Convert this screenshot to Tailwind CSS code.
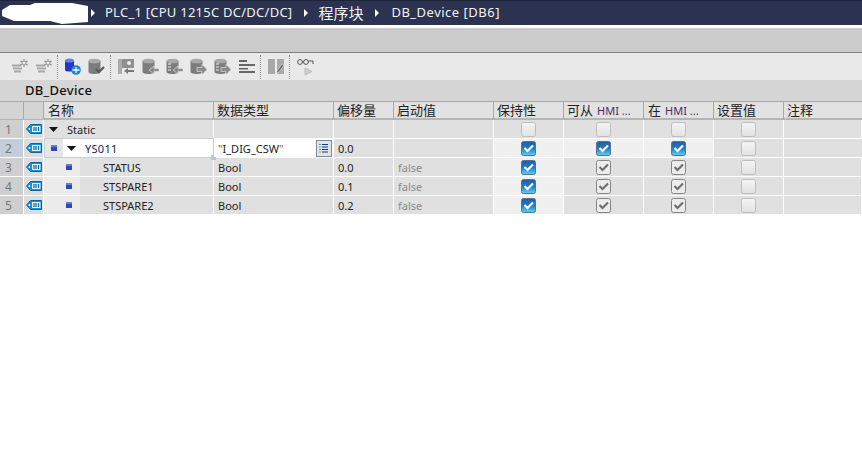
<!doctype html>
<html><head><meta charset="utf-8">
<script src="https://cdn.jsdelivr.net/npm/@tailwindcss/browser@4"></script>
</head>
<body class="w-[862px] h-[460px] overflow-hidden bg-white font-['Noto_Sans','Noto_Sans_CJK_SC',sans-serif] text-[11px] text-[#222]">
<svg class="absolute w-0 h-0"><defs>
<linearGradient id="blue" x1="0" y1="0" x2="0" y2="1"><stop offset="0" stop-color="#1d5fa8"/><stop offset=".5" stop-color="#2478c8"/><stop offset="1" stop-color="#55d8f8"/></linearGradient>
<linearGradient id="pale" x1="0" y1="0" x2="0" y2="1"><stop offset="0" stop-color="#f4f4f4"/><stop offset="1" stop-color="#e2e2e2"/></linearGradient>
<symbol id="tag" viewBox="0 0 16 10"><path d="M0.5 5 L4.500 0.500 H15.500 V9.500 H4.500 Z" fill="#1192d6" stroke="#0b66a5"/><rect x="6" y="2" width="8.500" height="6" fill="#eaf7ff"/><path d="M8 3v4M10 3v4M12.500 3v4" stroke="#0f6fb0" stroke-width="1.300"/><circle cx="3.400" cy="5" r="1" fill="#fff"/></symbol>
<symbol id="tri" viewBox="0 0 9 5"><path d="M0 0H9L4.500 5Z" fill="#111"/></symbol>
<symbol id="on" viewBox="0 0 15 15"><rect x="0.500" y="0.500" width="14" height="14" rx="2" fill="url(#blue)" stroke="#5a7188"/><path d="M3.500 7 L6.500 10 L12 4.500" fill="none" stroke="#fff" stroke-width="2.200"/></symbol>
<symbol id="gr" viewBox="0 0 15 15"><rect x="0.500" y="0.500" width="14" height="14" rx="2" fill="#ececec" stroke="#858585"/><path d="M3.500 7 L6.500 10 L12 4.500" fill="none" stroke="#6e6e6e" stroke-width="2.200"/></symbol>
<symbol id="off" viewBox="0 0 15 15"><rect x="0.500" y="0.500" width="14" height="14" rx="2" fill="url(#pale)" stroke="#bdbdbd"/></symbol>
<symbol id="dot" viewBox="0 0 6 6"><rect width="6" height="6" fill="#3346b8"/><rect width="6" height="2" fill="#6a7ad8"/></symbol>
<symbol id="gear" viewBox="0 0 17 17"><path d="M0 7.500h9M1 10.500h9M2 13.500h7" stroke="#a8a8a8" stroke-width="1.800"/><path d="M12 1v8M8.500 3l7 4M15.500 3l-7 4" stroke="#9a9a9a" stroke-width="1.500"/><circle cx="12" cy="5" r="1.300" fill="#eee"/></symbol>
<symbol id="db" viewBox="0 0 17 17"><path d="M0.500 3V14c0 2.600 12 2.600 12 0V3Z" fill="#7d7d7d"/><ellipse cx="6.500" cy="3" rx="6" ry="2.300" fill="#a9a9a9"/></symbol>
</defs></svg>

<header class="h-[25px] bg-[#2b3350] border-t border-[#1d2336] flex items-center text-[#f2f2f2] text-[13px] tracking-[0.25px]">
  <svg class="w-[89px] h-[24px] shrink-0" viewBox="0 0 89 24"><path d="M2 9L10 4H30L35 2H72L88 5V21L62 23L50 20H14L2 15Z" fill="#fff"/></svg>
  <svg class="ml-[2px] w-[4px] h-[8px]" viewBox="0 0 4 8"><path d="M0 0L4 4L0 8Z" fill="#fff"/></svg>
  <span class="ml-[10px]">PLC_1 [CPU 1215C DC/DC/DC]</span>
  <svg class="ml-[12px] w-[4px] h-[8px]" viewBox="0 0 4 8"><path d="M0 0L4 4L0 8Z" fill="#fff"/></svg>
  <span class="ml-[10px] text-[15px] tracking-normal">程序块</span>
  <svg class="ml-[12px] w-[4px] h-[8px]" viewBox="0 0 4 8"><path d="M0 0L4 4L0 8Z" fill="#fff"/></svg>
  <span class="ml-[12px] tracking-[0.5px]">DB_Device [DB6]</span>
</header>
<div class="h-[3px] bg-white"></div>
<div class="h-[25px] bg-[#cbcbcb] border-b border-[#808080]"></div>
<div class="h-[27px] bg-[#e9e9e9] flex items-center pl-[12px]">
  <svg class="w-[17px] h-[17px]"><use href="#gear"/></svg>
  <svg class="ml-[7px] w-[17px] h-[17px]"><use href="#gear"/></svg>
  <div class="ml-[4px] h-[24px] border-l border-dotted border-[#888]"></div>
  <svg class="ml-[6px] w-[17px] h-[17px]" viewBox="0 0 17 17"><path d="M1 2.500V12c0 2 9 2 9 0V2.500Z" fill="#2235c8"/><ellipse cx="5.500" cy="2.500" rx="4.500" ry="2" fill="#6f80e8"/><circle cx="12" cy="12" r="4.800" fill="#1f7fd8"/><path d="M8.500 12h7M12 9v6" stroke="#fff" stroke-width="1.300"/></svg>
  <svg class="ml-[7px] w-[17px] h-[17px]"><use href="#db"/><path d="M8 11l3 3 5-5" fill="none" stroke="#555" stroke-width="2"/></svg>
  <div class="ml-[5px] h-[24px] border-l border-dotted border-[#888]"></div>
  <svg class="ml-[7px] w-[17px] h-[17px]" viewBox="0 0 17 17"><path d="M0 1h4v15H0z" fill="#aaa"/><rect x="4" y="1" width="12" height="9" fill="#8f8f8f"/><circle cx="11" cy="5" r="2" fill="#eee"/><path d="M6 13l4-3v2h6v2h-6v2z" fill="#777"/></svg>
  <svg class="ml-[7px] w-[17px] h-[17px]"><use href="#db"/><path d="M7 12l5-4v2.500h5v3h-5V16z" fill="#8a8a8a" stroke="#e9e9e9" stroke-width=".6"/></svg>
  <svg class="ml-[7px] w-[17px] h-[17px]"><use href="#db"/><path d="M2 6h3M2 9h3M2 12h3" stroke="#eee"/><path d="M7 12l5-4v2.500h5v3h-5V16z" fill="#8a8a8a" stroke="#e9e9e9" stroke-width=".6"/></svg>
  <svg class="ml-[7px] w-[17px] h-[17px]"><use href="#db"/><path d="M7 9.500h5V6l5 5.500-5 5.500v-3.500H7z" fill="#8a8a8a" stroke="#e9e9e9" stroke-width=".6"/></svg>
  <svg class="ml-[7px] w-[17px] h-[17px]"><use href="#db"/><path d="M2 6h3M2 9h3M2 12h3" stroke="#eee"/><path d="M7 9.500h5V6l5 5.500-5 5.500v-3.500H7z" fill="#8a8a8a" stroke="#e9e9e9" stroke-width=".6"/></svg>
  <svg class="ml-[7px] w-[17px] h-[17px]" viewBox="0 0 17 17"><path d="M1 2h8v2H1zM1 6h16v2H1zM1 10h9v1.500H1zM1 13h16v2H1z" fill="#666"/></svg>
  <div class="ml-[5px] h-[24px] border-l border-dotted border-[#888]"></div>
  <svg class="ml-[7px] w-[17px] h-[17px]" viewBox="0 0 17 17"><rect x="0" y="1" width="16" height="15" fill="#a8a8a8"/><rect x="7" y="1" width="2" height="15" fill="#eee"/><path d="M9 13l5-7 2 1-5 7-3 1z" fill="#666" stroke="#eee" stroke-width=".6"/></svg>
  <div class="ml-[4px] h-[24px] border-l border-dotted border-[#888]"></div>
  <svg class="ml-[7px] w-[17px] h-[18px]" viewBox="0 0 17 18"><circle cx="3" cy="4" r="2.400" fill="none" stroke="#555"/><circle cx="9" cy="4" r="2.400" fill="none" stroke="#555"/><path d="M5.400 4h1.200M11.400 3H16v3" fill="none" stroke="#555"/><path d="M8 10l7 3.500-7 3.500z" fill="#cfcfcf" stroke="#bbb"/></svg>
</div>
<div class="h-[21px] bg-[#d6d6d6] flex items-center pl-[25px] text-[13px] font-medium tracking-[0.3px] text-[#111]">DB_Device</div>

<main class="border-t border-[#a8a8a8] text-[11px] leading-[14px]">
  <div class="h-[18px] grid grid-cols-[24px_20px_170px_120px_60px_100px_70px_80px_70px_70px_1fr] bg-[#e2e2e2] border-b-2 border-[#b5b5b5] text-[13px] leading-[16px] text-[#222] [&>div]:border-r [&>div]:border-[#a8a8a8] [&>div]:pl-[3px]">
    <div class="bg-[#d4d4d4]"></div><div class="bg-[#d4d4d4]"></div><div class="!pl-[4px]">名称</div><div>数据类型</div><div>偏移量</div><div>启动值</div><div>保持性</div><div><span class="mr-[4px]">可从</span><span class="text-[11px] text-[#4a2a6a]">HMI ...</span></div><div class="!pl-[4px]"><span class="mr-[4px]">在</span><span class="text-[11px] text-[#4a2a6a]">HMI ...</span></div><div>设置值</div><div class="!border-r-0">注释</div>
  </div>
  <!-- row 1 -->
  <div class="h-[19px] grid grid-cols-[24px_20px_170px_120px_60px_100px_70px_80px_70px_70px_1fr] items-stretch bg-[#e0e0e0] border-b border-white [&>div]:border-r [&>div]:border-white [&>div]:flex [&>div]:items-center">
    <div class="bg-[#cfcfcf] text-[#777] text-[12px] pl-[5px] pt-[2px]">1</div>
    <div class="justify-center bg-[#dcdcdc]"><svg class="w-[16px] h-[10px]"><use href="#tag"/></svg></div>
    <div class="pl-[5px]"><svg class="w-[9px] h-[5px]"><use href="#tri"/></svg><span class="ml-[9px] pt-[2px]">Static</span></div>
    <div></div><div></div><div></div>
    <div class="justify-center"><svg class="w-[15px] h-[15px]"><use href="#off"/></svg></div>
    <div class="justify-center"><svg class="w-[15px] h-[15px]"><use href="#off"/></svg></div>
    <div class="justify-center"><svg class="w-[15px] h-[15px]"><use href="#off"/></svg></div>
    <div class="justify-center"><svg class="w-[15px] h-[15px]"><use href="#off"/></svg></div>
    <div></div>
  </div>
  <!-- row 2 -->
  <div class="h-[19px] grid grid-cols-[24px_20px_170px_120px_60px_100px_70px_80px_70px_70px_1fr] items-stretch bg-[#f0f0f0] border-b border-white [&>div]:flex [&>div]:items-center">
    <div class="bg-[#c2cfdb] text-[#777] text-[12px] pl-[5px] pt-[2px] border-r border-white">2</div>
    <div class="justify-center bg-[#dcdcdc] border-r border-white"><svg class="w-[16px] h-[10px]"><use href="#tag"/></svg></div>
    <div class="relative bg-white border border-[#c5cdd8] -my-px"><span class="w-[18px] h-full bg-[#e6e6e6] flex items-center justify-center"><svg class="w-[6px] h-[6px]"><use href="#dot"/></svg></span><svg class="ml-[4px] w-[9px] h-[5px]"><use href="#tri"/></svg><span class="ml-[9px] pt-[2px] text-[#1a1a50] tracking-[0.3px]">YS011</span><span class="absolute -right-[3px] -bottom-[3px] w-[5px] h-[5px] bg-[#b8c6d8]"></span></div>
    <div class="bg-white border-r border-white pl-[4px] relative"><span class="text-[#222] pt-[2px]"><span class="text-[#a05a10]">"</span>I_DIG_CSW<span class="text-[#a05a10]">"</span></span><span class="absolute right-[1px] top-[1px] w-[16px] h-[17px] border border-[#7f8a99] bg-[#dfe3ea] flex items-center justify-center"><svg class="w-[10px] h-[11px]" viewBox="0 0 10 11"><path d="M1 1v1M1 3.500v1M1 6v1M1 8.500v1" stroke="#123a80"/><path d="M3 1.500h6M3 4h6M3 6.500h6M3 9h6" stroke="#123a80"/></svg></span></div>
    <div class="bg-[#e0e0e0] border-r border-white pl-[4px] pt-[2px]">0.0</div>
    <div class="bg-[#e0e0e0] border-r border-white"></div>
    <div class="justify-center border-r border-white"><svg class="w-[15px] h-[15px]"><use href="#on"/></svg></div>
    <div class="justify-center border-r border-white"><svg class="w-[15px] h-[15px]"><use href="#on"/></svg></div>
    <div class="justify-center border-r border-white"><svg class="w-[15px] h-[15px]"><use href="#on"/></svg></div>
    <div class="justify-center border-r border-white bg-[#e0e0e0]"><svg class="w-[15px] h-[15px]"><use href="#off"/></svg></div>
    <div class="bg-[#e0e0e0]"></div>
  </div>
  <!-- row 3 -->
  <div class="h-[19px] grid grid-cols-[24px_20px_170px_120px_60px_100px_70px_80px_70px_70px_1fr] items-stretch bg-[#e0e0e0] border-b border-white [&>div]:border-r [&>div]:border-white [&>div]:flex [&>div]:items-center">
    <div class="bg-[#cfcfcf] text-[#777] text-[12px] pl-[5px] pt-[2px]">3</div>
    <div class="justify-center bg-[#dcdcdc]"><svg class="w-[16px] h-[10px]"><use href="#tag"/></svg></div>
    <div class=""><span class="w-[36px] h-full bg-[#ebebeb] flex items-center justify-end pr-[8px]"><svg class="w-[6px] h-[6px]"><use href="#dot"/></svg></span><span class="ml-[23px] pt-[2px]">STATUS</span></div>
    <div class="pl-[4px] pt-[2px]">Bool</div><div class="pl-[4px] pt-[2px]">0.0</div><div class="pl-[4px] pt-[2px] text-[#8a8a8a]">false</div>
    <div class="justify-center bg-[#f0f0f0]"><svg class="w-[15px] h-[15px]"><use href="#on"/></svg></div>
    <div class="justify-center"><svg class="w-[15px] h-[15px]"><use href="#gr"/></svg></div>
    <div class="justify-center"><svg class="w-[15px] h-[15px]"><use href="#gr"/></svg></div>
    <div class="justify-center"><svg class="w-[15px] h-[15px]"><use href="#off"/></svg></div>
    <div></div>
  </div>
  <!-- row 4 -->
  <div class="h-[19px] grid grid-cols-[24px_20px_170px_120px_60px_100px_70px_80px_70px_70px_1fr] items-stretch bg-[#e0e0e0] border-b border-white [&>div]:border-r [&>div]:border-white [&>div]:flex [&>div]:items-center">
    <div class="bg-[#cfcfcf] text-[#777] text-[12px] pl-[5px] pt-[2px]">4</div>
    <div class="justify-center bg-[#dcdcdc]"><svg class="w-[16px] h-[10px]"><use href="#tag"/></svg></div>
    <div class=""><span class="w-[36px] h-full bg-[#ebebeb] flex items-center justify-end pr-[8px]"><svg class="w-[6px] h-[6px]"><use href="#dot"/></svg></span><span class="ml-[23px] pt-[2px]">STSPARE1</span></div>
    <div class="pl-[4px] pt-[2px]">Bool</div><div class="pl-[4px] pt-[2px]">0.1</div><div class="pl-[4px] pt-[2px] text-[#8a8a8a]">false</div>
    <div class="justify-center bg-[#f0f0f0]"><svg class="w-[15px] h-[15px]"><use href="#on"/></svg></div>
    <div class="justify-center"><svg class="w-[15px] h-[15px]"><use href="#gr"/></svg></div>
    <div class="justify-center"><svg class="w-[15px] h-[15px]"><use href="#gr"/></svg></div>
    <div class="justify-center"><svg class="w-[15px] h-[15px]"><use href="#off"/></svg></div>
    <div></div>
  </div>
  <!-- row 5 -->
  <div class="h-[19px] grid grid-cols-[24px_20px_170px_120px_60px_100px_70px_80px_70px_70px_1fr] items-stretch bg-[#e0e0e0] border-b border-white [&>div]:border-r [&>div]:border-white [&>div]:flex [&>div]:items-center">
    <div class="bg-[#cfcfcf] text-[#777] text-[12px] pl-[5px] pt-[2px]">5</div>
    <div class="justify-center bg-[#dcdcdc]"><svg class="w-[16px] h-[10px]"><use href="#tag"/></svg></div>
    <div class=""><span class="w-[36px] h-full bg-[#ebebeb] flex items-center justify-end pr-[8px]"><svg class="w-[6px] h-[6px]"><use href="#dot"/></svg></span><span class="ml-[23px] pt-[2px]">STSPARE2</span></div>
    <div class="pl-[4px] pt-[2px]">Bool</div><div class="pl-[4px] pt-[2px]">0.2</div><div class="pl-[4px] pt-[2px] text-[#8a8a8a]">false</div>
    <div class="justify-center bg-[#f0f0f0]"><svg class="w-[15px] h-[15px]"><use href="#on"/></svg></div>
    <div class="justify-center"><svg class="w-[15px] h-[15px]"><use href="#gr"/></svg></div>
    <div class="justify-center"><svg class="w-[15px] h-[15px]"><use href="#gr"/></svg></div>
    <div class="justify-center"><svg class="w-[15px] h-[15px]"><use href="#off"/></svg></div>
    <div></div>
  </div>
</main>
</body></html>
